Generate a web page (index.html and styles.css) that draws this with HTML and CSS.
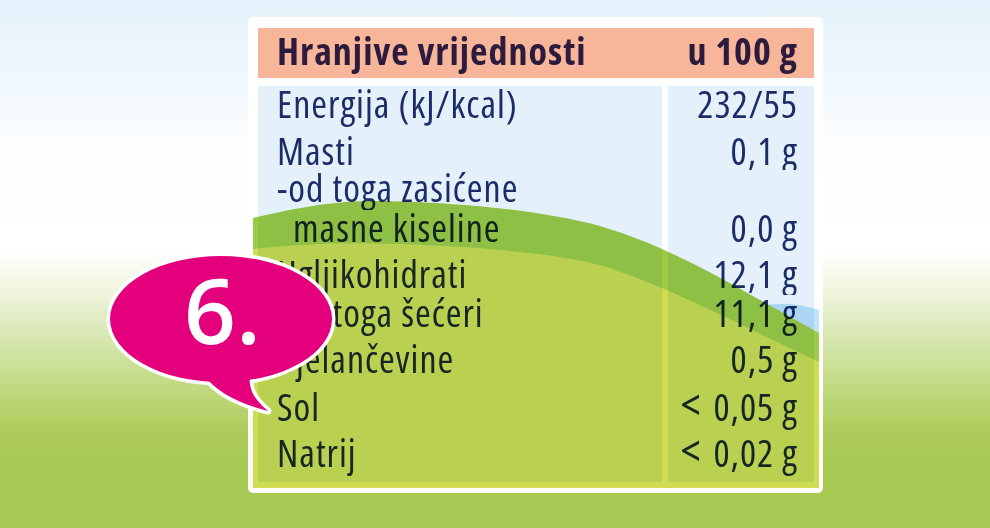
FILE: index.html
```html
<!DOCTYPE html>
<html lang="hr">
<head>
<meta charset="utf-8">
<title>Hranjive vrijednosti</title>
<link rel="stylesheet" href="styles.css">
</head>
<body>
<main class="scene">
  <section class="card">
    <div class="head">
      <span>Hranjive vrijednosti</span>
      <span>u 100 g</span>
    </div>
    <div class="rows">
      <div class="row h47"><div class="name">Energija (kJ/kcal)</div><div class="val">232/55</div></div>
      <div class="row h37"><div class="name">Masti</div><div class="val">0,1 g</div></div>
      <div class="row h40"><div class="name dash">-od toga zasićene</div><div class="val"></div></div>
      <div class="row h46"><div class="name indent">masne kiseline</div><div class="val">0,0 g</div></div>
      <div class="row h39"><div class="name">Ugljikohidrati</div><div class="val">12,1 g</div></div>
      <div class="row h46"><div class="name dash">-od toga šećeri</div><div class="val">11,1 g</div></div>
      <div class="row h48"><div class="name">Bjelančevine</div><div class="val">0,5 g</div></div>
      <div class="row h46"><div class="name">Sol</div><div class="val"><span class="lt">&lt;</span> 0,05 g</div></div>
      <div class="row h47"><div class="name">Natrij</div><div class="val"><span class="lt">&lt;</span> 0,02 g</div></div>
    </div>
    <svg class="hill" viewBox="253 190 566 298" preserveAspectRatio="none" aria-hidden="true">
      <path class="sky" d="M690,345 C730,312 760,302 790,304 C803,305 812,308 819,310 L819,380 L690,380 Z"/>
      <path class="dark" d="M253,218 C300,207 335,201 375,201 C455,202 540,210 600,226 C680,250 740,290 819,333 L819,488 L253,488 Z"/>
      <path class="light" d="M253,249 C300,244 340,242 400,244 C480,247 560,253 610,268 C680,292 750,330 819,362 L819,488 L253,488 Z"/>
    </svg>
  </section>
  <div class="bubble">
    <svg viewBox="100 245 250 175" aria-hidden="true">
      <ellipse class="edge" cx="221" cy="319" rx="111" ry="63"/>
      <path class="edge" d="M205,376 C216,392 240,404 268,411 C255,400 248,390 250,374 Z"/>
      <ellipse class="fill" cx="221" cy="319" rx="111" ry="63"/>
      <path class="fill" d="M205,376 C216,392 240,404 268,411 C255,400 248,390 250,374 Z"/>
    </svg>
    <span class="num">6.</span>
  </div>
</main>
</body>
</html>
```
FILE: styles.css
```css
html, body {
  margin: 0;
  padding: 0;
  overflow: hidden;
}

.scene {
  position: relative;
  box-sizing: border-box;
  width: 990px;
  height: 528px;
  padding: 17px 0 0 248px;
  background: linear-gradient(180deg,
    #e5f2fb 0px, #eef7fd 70px, #fbfdff 140px, #ffffff 250px,
    #f3f6e3 285px, #d9e8b4 335px, #c2da82 385px, #aecc5c 430px,
    #a7c853 470px, #a7c853 528px);
  font-family: "Open Sans", "Noto Sans", "DejaVu Sans", sans-serif;
  font-stretch: condensed;
}

.card {
  position: relative;
  box-sizing: border-box;
  width: 575px;
  height: 476px;
  padding: 11px 9px 11px 10px;
  background: #ffffff;
  border-radius: 5px;
}

.head {
  display: flex;
  justify-content: space-between;
  box-sizing: border-box;
  height: 50px;
  padding: 0 16px 4px 19px;
  background: #f7b59a;
  color: #2c1b3d;
  font-size: 38px;
  font-weight: 700;
  line-height: 45px;
  letter-spacing: 1px;
  white-space: nowrap;
}

.rows {
  margin-top: 8px;
}

.row {
  display: grid;
  grid-template-columns: 404px 146px;
  column-gap: 6px;
  color: #1b2c68;
  font-size: 38px;
  font-weight: 500;
  line-height: 35px;
  letter-spacing: 1px;
  white-space: nowrap;
}

.h37 { height: 37px; }
.h39 { height: 39px; }
.h40 { height: 40px; }
.h46 { height: 46px; }
.h47 { height: 47px; }
.h48 { height: 48px; }

.name, .val {
  background: #e4f1fb;
}

.name {
  padding-left: 19px;
}

.name.indent {
  padding-left: 35px;
}

.val {
  padding-right: 16px;
  text-align: right;
}

.val .lt {
  font-size: 46px;
  line-height: 0;
  letter-spacing: 0;
  margin-right: 5px;
}

.hill {
  position: absolute;
  left: 5px;
  top: 173px;
  width: 566px;
  height: 298px;
  mix-blend-mode: multiply;
  pointer-events: none;
}

.hill .sky { fill: #bfe3f7; }
.hill .dark { fill: #9ecb45; }
.hill .light { fill: #d0dc52; }

.bubble {
  position: absolute;
  left: 100px;
  top: 245px;
  width: 250px;
  height: 175px;
}

.bubble svg {
  display: block;
  width: 250px;
  height: 175px;
}

.bubble .edge {
  fill: #e4007d;
  stroke: #ffffff;
  stroke-width: 7;
  stroke-linejoin: round;
}

.bubble .fill {
  fill: #e4007d;
}

.num {
  position: absolute;
  left: 84px;
  top: 4px;
  color: #ffffff;
  font-family: "Open Sans", "Noto Sans", sans-serif;
  font-stretch: 100%;
  font-size: 91px;
  font-weight: 600;
  line-height: 120px;
  letter-spacing: 0px;
}
```
